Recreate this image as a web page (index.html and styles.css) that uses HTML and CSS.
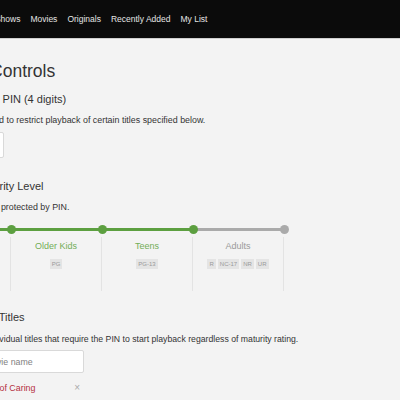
FILE: index.html
```html
<!DOCTYPE html>
<html lang="en">
<head>
  <meta charset="UTF-8">
  <title>Parental Controls</title>
  <link rel="stylesheet" href="styles.css">
</head>
<body>
  <div class="header">
    <ul class="nav">
      <li>Home</li>
      <li>TV Shows</li>
      <li>Movies</li>
      <li>Originals</li>
      <li>Recently Added</li>
      <li>My List</li>
    </ul>
  </div>

  <div class="main">
    <h1>Parental Controls</h1>

    <h2>Parental Control PIN (4 digits)</h2>
    <p class="desc">Your PIN will be used to restrict playback of certain titles specified below.</p>
    <input class="pin-input" type="text" maxlength="4">

    <h2 class="section">Restrict by Maturity Level</h2>
    <p class="desc">Higher levels will be protected by PIN.</p>

    <div class="levels">
      <div class="level on">
        <div class="level-bar"></div>
        <div class="level-body">
          <div class="level-name">Little Kids</div>
          <div class="ratings"><span>G</span><span>TV-Y</span></div>
        </div>
      </div>
      <div class="level on">
        <div class="level-bar"></div>
        <div class="level-body">
          <div class="level-name">Older Kids</div>
          <div class="ratings"><span>PG</span></div>
        </div>
      </div>
      <div class="level on">
        <div class="level-bar"></div>
        <div class="level-body">
          <div class="level-name">Teens</div>
          <div class="ratings"><span>PG-13</span></div>
        </div>
      </div>
      <div class="level">
        <div class="level-bar"></div>
        <div class="level-body">
          <div class="level-name">Adults</div>
          <div class="ratings"><span>R</span><span>NC-17</span><span>NR</span><span>UR</span></div>
        </div>
      </div>
    </div>

    <h2 class="section titles-head">Restrict Certain Titles</h2>
    <p class="desc titles-desc">You can also set individual titles that require the PIN to start playback regardless of maturity rating.</p>
    <input class="title-input" type="text" placeholder="Enter show or movie name">
    <div class="restricted">
      <span class="restricted-name">The Fundamentals of Caring</span>
      <span class="remove">&times;</span>
    </div>
  </div>
</body>
</html>
```

FILE: styles.css
```css
body {
  margin: 0;
  background-color: #f3f3f3;
  color: #333;
  font-family: "Liberation Sans", Arial, sans-serif;
  overflow: hidden;
}

.header {
  height: 38px;
  background-color: #0b0b0b;
  border-bottom: 1px solid #cfcfcf;
  display: flex;
  align-items: center;
}

.nav {
  display: flex;
  gap: 10px;
  list-style: none;
  margin: 0 0 0 -51px;
  padding: 0;
  font-size: 8.5px;
  color: #e5e5e5;
  white-space: nowrap;
}

/* the page is scrolled sideways, the left part is off screen */
.main {
  margin-left: -80px;
  padding-top: 21px;
  white-space: nowrap;
}

h1 {
  margin: 0;
  font-size: 17.5px;
  font-weight: normal;
  line-height: 22px;
  color: #333;
}

h2 {
  margin: 10px 0 0;
  font-size: 11px;
  font-weight: normal;
  line-height: 14px;
  color: #333;
}

h2.section {
  margin-top: 21px;
}

h2.titles-head {
  margin-top: 19px;
}

.desc {
  margin: 8px 0 0;
  font-size: 8.9px;
  line-height: 12px;
  color: #333;
}

.desc.titles-desc {
  margin-top: 9px;
  font-size: 8.7px;
}

.pin-input {
  display: block;
  box-sizing: border-box;
  width: 84px;
  height: 26px;
  margin-top: 6px;
  border: 1px solid #d9d9d9;
  border-radius: 2px;
  background-color: #fff;
}

.levels {
  display: grid;
  grid-template-columns: repeat(4, 91px);
  margin-top: 15px;
}

.level-bar {
  position: relative;
  height: 3px;
  background-color: #aaa;
}

.level.on .level-bar {
  background-color: #5c9f40;
}

.level-bar::after {
  content: "";
  position: absolute;
  right: -4.5px;
  top: -3px;
  width: 9px;
  height: 9px;
  border-radius: 50%;
  background-color: inherit;
  z-index: 1;
}

.level-body {
  height: 54px;
  margin-top: 6px;
  padding-top: 4px;
  box-sizing: border-box;
  border-right: 1px solid #e3e3e3;
  text-align: center;
}

.level-name {
  font-size: 9px;
  line-height: 11px;
  color: #9a9a9a;
}

.level.on .level-name {
  color: #72ad57;
}

.ratings {
  display: flex;
  justify-content: center;
  gap: 2px;
  margin-top: 7px;
}

.ratings span {
  padding: 0 2px;
  font-size: 6px;
  line-height: 10px;
  background-color: #e4e4e4;
  color: #999;
}

.title-input {
  display: block;
  box-sizing: border-box;
  width: 164px;
  height: 23px;
  margin-top: 5px;
  padding: 0 7px;
  border: 1px solid #d9d9d9;
  border-radius: 2px;
  background-color: #fff;
  font-family: inherit;
  font-size: 8.8px;
}

.title-input::placeholder {
  color: #7f7f7f;
}

.restricted {
  display: flex;
  justify-content: space-between;
  width: 164px;
  box-sizing: border-box;
  margin-top: 8px;
  padding: 0 4px 0 3px;
  font-size: 8.9px;
  line-height: 14px;
}

.restricted-name {
  color: #b5303f;
}

.remove {
  color: #aaa;
  font-size: 10px;
}
```
